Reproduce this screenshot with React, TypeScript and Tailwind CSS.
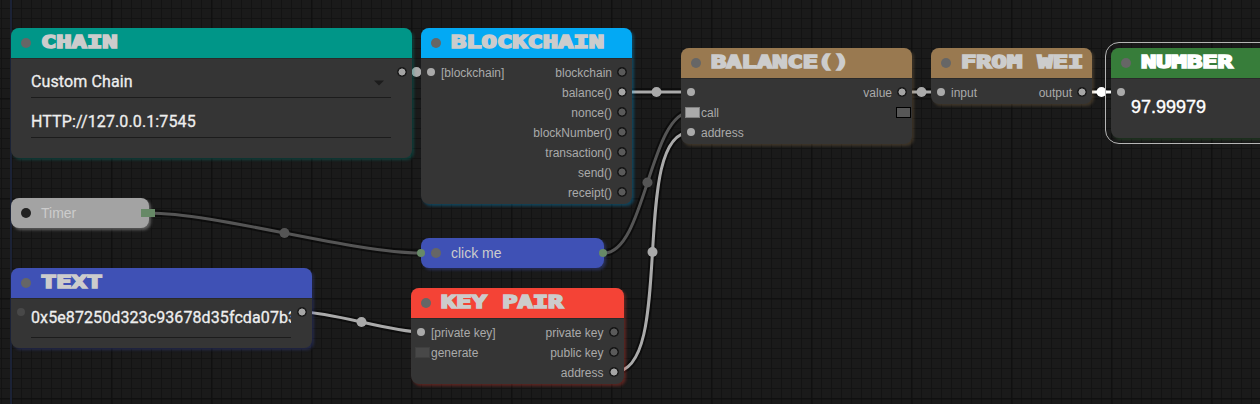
import type { ReactNode } from "react";

type Slot = { label: string; kind: string };

const DOTS: Record<string, string> = {
  in: "size-2 rounded-full bg-[#aaa]",
  idle: "size-2 rounded-full bg-[#484848]",
  out: "size-[10px] rounded-full bg-[radial-gradient(circle,#a5a5a5_3.2px,#1a1a1a_3.8px)]",
  free: "size-[10px] rounded-full bg-[radial-gradient(circle,#5a5a5a_3.2px,#161616_3.8px)]",
  event: "mt-px ml-[3px] h-[11px] w-[15px] border border-[#808080] bg-[#aaa]",
  eventIdle: "mt-px ml-[3px] h-[11px] w-[15px] border border-[#3f3f3f] bg-[#484848]",
  eventFree: "mt-px ml-[3px] h-[11px] w-[15px] border border-black bg-[#575757]",
};

function Dot({ kind }: { kind: string }) {
  return (
    <span className="flex h-5 w-5 shrink-0 items-center justify-center">
      <span className={`shrink-0 ${DOTS[kind]}`} />
    </span>
  );
}

function SlotRow({ input, output }: { input?: Slot; output?: Slot }) {
  return (
    <div className="flex h-5 items-center justify-between text-[12px] leading-5 text-[#aaa]">
      <div className="flex items-center">
        {input && (
          <>
            <Dot kind={input.kind} />
            <span className="pt-0.5">{input.label}</span>
          </>
        )}
      </div>
      <div className="flex items-center">
        {output && (
          <>
            <span className="pt-0.5">{output.label}</span>
            <Dot kind={output.kind} />
          </>
        )}
      </div>
    </div>
  );
}

function GraphNode({
  place,
  head,
  title,
  titleColor = "text-[#ccc]",
  children,
}: {
  place: string;
  head: string;
  title: string;
  titleColor?: string;
  children: ReactNode;
}) {
  return (
    <section className={`absolute flex flex-col rounded-lg bg-[#353535] ${place}`}>
      <header className={`flex h-[30px] shrink-0 items-center gap-[10px] rounded-t-lg pl-[10px] ${head}`}>
        <span className="size-[10px] shrink-0 rounded-full bg-[#666]" />
        <h2
          className={`origin-left scale-x-[1.495] pb-[2px] whitespace-pre font-['DejaVu_Sans_Mono',monospace] text-[17px] leading-[26px] font-bold [-webkit-text-stroke:1.6px_currentColor] ${titleColor}`}
        >
          {title}
        </h2>
      </header>
      <div className="flex grow flex-col border-t border-[#2a2a2a] pt-[3px]">{children}</div>
    </section>
  );
}

function Field({ children }: { children: ReactNode }) {
  return (
    <div className="flex h-[30px] items-center justify-between border-b border-[#1c1c1c] pb-0.5 font-[Roboto,sans-serif] text-[16px] tracking-[0.12px] text-[#eee] [-webkit-text-stroke:0.3px_currentColor]">
      {children}
    </div>
  );
}

const LINKS = [
  { from: [402, 72], to: [431, 72], color: "#aaa" },
  { from: [622, 92], to: [691, 92], color: "#aaa" },
  { from: [902, 92], to: [941, 92], color: "#aaa" },
  { from: [1082, 92], to: [1121, 92], color: "#fff" },
  { from: [148, 213], to: [421, 253], color: "#555" },
  { from: [604, 253], to: [691, 112], color: "#555" },
  { from: [302, 312], to: [421, 332], color: "#aaa" },
  { from: [614, 372], to: [691, 132], color: "#aaa" },
];

function Links() {
  return (
    <svg className="absolute inset-0" width="1260" height="404" fill="none">
      {LINKS.map(({ from: [x1, y1], to: [x2, y2], color }) => {
        const bend = Math.hypot(x2 - x1, y2 - y1) * 0.25;
        const d = `M${x1} ${y1}C${x1 + bend} ${y1} ${x2 - bend} ${y2} ${x2} ${y2}`;
        return (
          <g key={d}>
            <path d={d} stroke="#000" strokeOpacity="0.5" strokeWidth="7" />
            <path d={d} stroke={color} strokeWidth="3" />
            <circle cx={(x1 + x2) / 2} cy={(y1 + y2) / 2} r="5" fill={color} />
          </g>
        );
      })}
    </svg>
  );
}

function Grid() {
  return (
    <svg className="absolute inset-0" width="1260" height="404">
      <defs>
        <pattern id="minor" width="10" height="10" x="1" y="8" patternUnits="userSpaceOnUse">
          <path d="M0 0h10v1H1v9H0z" fill="#131313" />
        </pattern>
        <pattern id="major" width="100" height="100" x="11" y="98" patternUnits="userSpaceOnUse">
          <path d="M0 0h100v1.5H1.5V100H0z" fill="#101010" />
        </pattern>
      </defs>
      <rect width="1260" height="404" fill="url(#minor)" />
      <rect width="1260" height="404" fill="url(#major)" />
      <rect x="10" width="2" height="404" fill="#1b2236" />
    </svg>
  );
}

const METHODS = ["blockchain", "balance()", "nonce()", "blockNumber()", "transaction()", "send()", "receipt()"];

export default function App() {
  return (
    <main className="relative h-[404px] w-[1260px] overflow-hidden bg-[#1a1a1a] font-['Liberation_Sans',Arial,sans-serif]">
      <Grid />
      <Links />

      <GraphNode
        place="left-[11px] top-7 h-[130px] w-[401px] shadow-[2px_2px_3px_rgba(0,150,136,0.3)]"
        head="bg-[#009688]"
        title="CHAIN"
      >
        <div className="flex">
          <div className="flex w-[381px] flex-col gap-[10px] pt-[6px] pr-px pl-5">
            <Field>
              <span>Custom Chain</span>
              <svg className="mt-0.5 mr-[7px]" width="10" height="6">
                <path d="M0 .5h10L5 5.5z" fill="#1c1c1c" />
              </svg>
            </Field>
            <Field>HTTP://127.0.0.1:7545</Field>
          </div>
          <Dot kind="out" />
        </div>
      </GraphNode>

      <GraphNode
        place="left-[421px] top-7 h-[176px] w-[211px] shadow-[2px_2px_3px_rgba(3,169,244,0.3)]"
        head="bg-[#03a9f4]"
        title="BLOCKCHAIN"
      >
        {METHODS.map((label, i) => (
          <SlotRow
            key={label}
            input={i === 0 ? { label: "[blockchain]", kind: "in" } : undefined}
            output={{ label, kind: i === 1 ? "out" : "free" }}
          />
        ))}
      </GraphNode>

      <GraphNode
        place="left-[681px] top-12 h-24 w-[231px] shadow-[2px_2px_3px_rgba(153,121,80,0.3)]"
        head="bg-[#997950]"
        title="BALANCE()"
      >
        <SlotRow input={{ label: "", kind: "in" }} output={{ label: "value", kind: "out" }} />
        <SlotRow input={{ label: "call", kind: "event" }} output={{ label: "", kind: "eventFree" }} />
        <SlotRow input={{ label: "address", kind: "in" }} />
      </GraphNode>

      <GraphNode
        place="left-[931px] top-12 h-14 w-[161px] shadow-[2px_2px_3px_rgba(153,121,80,0.3)]"
        head="bg-[#997950]"
        title="FROM WEI"
      >
        <SlotRow input={{ label: "input", kind: "in" }} output={{ label: "output", kind: "out" }} />
      </GraphNode>

      <div className="absolute top-[42px] left-[1105px] h-[102px] w-[240px] rounded-[14px] border border-[#b5b5b5]" />
      <GraphNode
        place="left-[1111px] top-12 h-[90px] w-[230px] shadow-[2px_2px_3px_rgba(56,125,58,0.3)]"
        head="bg-[#377d3a]"
        title="NUMBER"
        titleColor="text-white"
      >
        <Dot kind="in" />
        <span className="-mt-[5px] pl-5 text-[18px] leading-5 text-white [-webkit-text-stroke:0.4px_currentColor]">
          97.99979
        </span>
      </GraphNode>

      <div className="absolute top-[198px] left-[11px] flex h-[30px] w-[138px] items-center gap-[10px] rounded-lg bg-[#a3a3a3] pl-[10px] text-[14px] text-[#ccc] shadow-[2px_2px_3px_rgba(163,163,163,0.5)]">
        <span className="size-[10px] rounded-full bg-[#222]" />
        <span>Timer</span>
        <span className="absolute top-[11px] left-[130px] h-2 w-[14px] bg-[#678967]" />
      </div>

      <div className="absolute top-[238px] left-[421px] flex h-[30px] w-[183px] items-center gap-[10px] rounded-lg bg-[#3f51b5] pl-[10px] text-[14px] text-[#ccc] shadow-[2px_2px_3px_rgba(63,81,181,0.4)]">
        <span className="size-[10px] rounded-full bg-[#666]" />
        <span>click me</span>
        <span className="absolute top-[11px] -left-1 size-2 rounded-full bg-[#678967]" />
        <span className="absolute top-[11px] left-[178px] size-2 rounded-full bg-[#678967]" />
      </div>

      <GraphNode
        place="left-[11px] top-[268px] h-20 w-[301px] shadow-[2px_2px_3px_rgba(63,81,181,0.3)]"
        head="bg-[#3f51b5]"
        title="TEXT"
      >
        <div className="flex">
          <div className="-mr-5">
            <Dot kind="idle" />
          </div>
          <div className="w-[281px] pt-[5px] pr-px pl-5">
            <div className="h-[31px] overflow-hidden border-b border-[#1c1c1c] pt-px font-[Roboto,sans-serif] text-[16px] leading-[20px] tracking-[0.1px] whitespace-nowrap text-[#eee] [-webkit-text-stroke:0.3px_currentColor]">
              0x5e87250d323c93678d35fcda07b3
            </div>
          </div>
          <Dot kind="out" />
        </div>
      </GraphNode>

      <GraphNode
        place="left-[411px] top-72 h-24 w-[212.5px] shadow-[2px_2px_3px_rgba(244,67,54,0.3)]"
        head="bg-[#f44336]"
        title="KEY PAIR"
      >
        <SlotRow input={{ label: "[private key]", kind: "in" }} output={{ label: "private key", kind: "free" }} />
        <SlotRow input={{ label: "generate", kind: "eventIdle" }} output={{ label: "public key", kind: "free" }} />
        <SlotRow output={{ label: "address", kind: "out" }} />
      </GraphNode>
    </main>
  );
}
